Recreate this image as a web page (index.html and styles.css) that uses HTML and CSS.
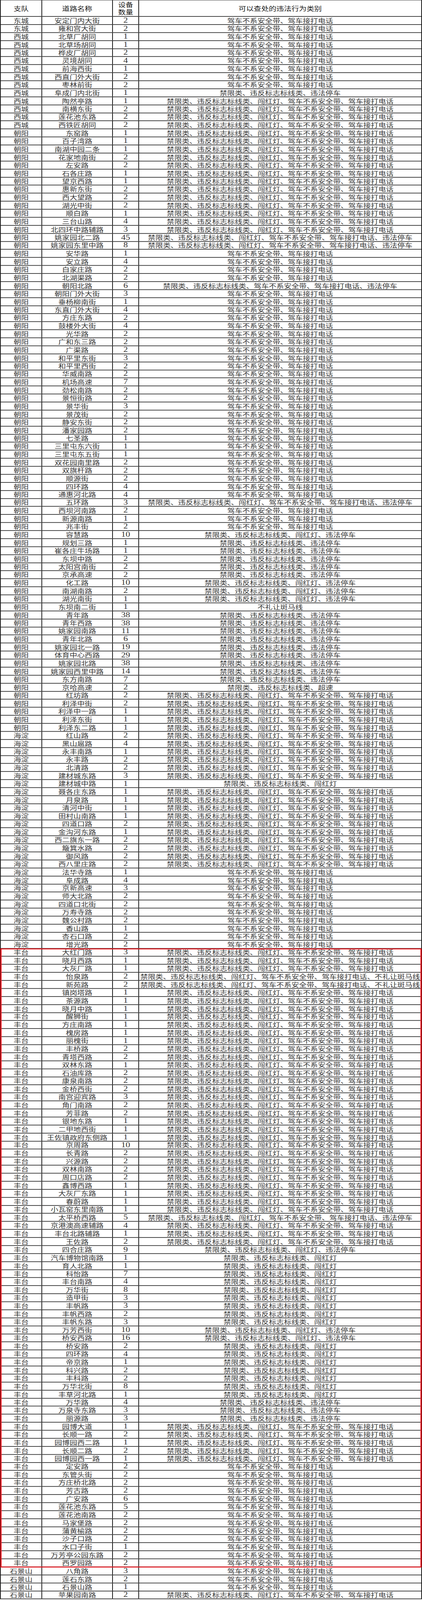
FILE: index.html
```html
<!DOCTYPE html>
<html lang="zh-CN">
<head>
<meta charset="utf-8">
<meta name="viewport" content="width=1080, initial-scale=1">
<title>可以查处的违法行为类别</title>
<link rel="stylesheet" href="styles.css">
</head>
<body>
<div class="wrap">
<div class="t">
<div class="h"><span>支队</span><span>道路名称</span><span><b class="two">设备<br>数量</b></span><span>可以查处的违法行为类别</span></div>
<div class="r"><span>东城</span><span>安定门内大街</span><span class="n">2</span><span>驾车不系安全带、驾车接打电话</span></div>
<div class="r"><span>东城</span><span>雍和宫大街</span><span class="n">2</span><span>驾车不系安全带、驾车接打电话</span></div>
<div class="r"><span>西城</span><span>北草厂胡同</span><span class="n">1</span><span>驾车不系安全带、驾车接打电话</span></div>
<div class="r"><span>西城</span><span>北草场胡同</span><span class="n">1</span><span>驾车不系安全带、驾车接打电话</span></div>
<div class="r"><span>西城</span><span>桦皮厂胡同</span><span class="n">2</span><span>驾车不系安全带、驾车接打电话</span></div>
<div class="r"><span>西城</span><span>灵境胡同</span><span class="n">4</span><span>驾车不系安全带、驾车接打电话</span></div>
<div class="r"><span>西城</span><span>前海西街</span><span class="n">1</span><span>驾车不系安全带、驾车接打电话</span></div>
<div class="r"><span>西城</span><span>西直门外大街</span><span class="n">2</span><span>驾车不系安全带、驾车接打电话</span></div>
<div class="r"><span>西城</span><span>枣林前街</span><span class="n">2</span><span>驾车不系安全带、驾车接打电话</span></div>
<div class="r"><span>西城</span><span>阜成门内北街</span><span class="n">1</span><span>禁限类、违反标志标线类、违法停车</span></div>
<div class="r"><span>西城</span><span>陶然亭路</span><span class="n">1</span><span>禁限类、违反标志标线类、闯红灯、驾车不系安全带、驾车接打电话</span></div>
<div class="r"><span>西城</span><span>南横东街</span><span class="n">2</span><span>禁限类、违反标志标线类、闯红灯、驾车不系安全带、驾车接打电话</span></div>
<div class="r"><span>西城</span><span>莲花池东路</span><span class="n">2</span><span>禁限类、违反标志标线类、闯红灯、驾车不系安全带、驾车接打电话</span></div>
<div class="r"><span>西城</span><span>西铁匠胡同</span><span class="n">2</span><span>禁限类、违反标志标线类、闯红灯、驾车不系安全带、驾车接打电话</span></div>
<div class="r"><span>朝阳</span><span>东窑路</span><span class="n">1</span><span>禁限类、违反标志标线类、闯红灯、驾车不系安全带、驾车接打电话</span></div>
<div class="r"><span>朝阳</span><span>百子湾路</span><span class="n">1</span><span>禁限类、违反标志标线类、闯红灯、驾车不系安全带、驾车接打电话</span></div>
<div class="r"><span>朝阳</span><span>南湖中园二条</span><span class="n">1</span><span>禁限类、违反标志标线类、闯红灯、驾车不系安全带、驾车接打电话</span></div>
<div class="r"><span>朝阳</span><span>花家地南街</span><span class="n">2</span><span>禁限类、违反标志标线类、闯红灯、驾车不系安全带、驾车接打电话</span></div>
<div class="r"><span>朝阳</span><span>左安路</span><span class="n">2</span><span>禁限类、违反标志标线类、闯红灯、驾车不系安全带、驾车接打电话</span></div>
<div class="r"><span>朝阳</span><span>石各庄路</span><span class="n">1</span><span>禁限类、违反标志标线类、闯红灯、驾车不系安全带、驾车接打电话</span></div>
<div class="r"><span>朝阳</span><span>望京西路</span><span class="n">1</span><span>禁限类、违反标志标线类、闯红灯、驾车不系安全带、驾车接打电话</span></div>
<div class="r"><span>朝阳</span><span>惠新东街</span><span class="n">2</span><span>禁限类、违反标志标线类、闯红灯、驾车不系安全带、驾车接打电话</span></div>
<div class="r"><span>朝阳</span><span>西大望路</span><span class="n">2</span><span>禁限类、违反标志标线类、闯红灯、驾车不系安全带、驾车接打电话</span></div>
<div class="r"><span>朝阳</span><span>湖光中街</span><span class="n">2</span><span>禁限类、违反标志标线类、闯红灯、驾车不系安全带、驾车接打电话</span></div>
<div class="r"><span>朝阳</span><span>顺白路</span><span class="n">1</span><span>禁限类、违反标志标线类、闯红灯、驾车不系安全带、驾车接打电话</span></div>
<div class="r"><span>朝阳</span><span>三台山路</span><span class="n">4</span><span>禁限类、违反标志标线类、闯红灯、驾车不系安全带、驾车接打电话</span></div>
<div class="r"><span>朝阳</span><span>北四环中路辅路</span><span class="n">3</span><span>禁限类、违反标志标线类、闯红灯、驾车不系安全带、驾车接打电话</span></div>
<div class="r"><span>朝阳</span><span>姚家园北二路</span><span class="n">45</span><span>禁限类、违反标志标线类、闯红灯、驾车不系安全带、驾车接打电话、违法停车</span></div>
<div class="r"><span>朝阳</span><span>姚家园东里中路</span><span class="n">8</span><span>禁限类、违反标志标线类、闯红灯、驾车不系安全带、驾车接打电话、违法停车</span></div>
<div class="r"><span>朝阳</span><span>安华路</span><span class="n">1</span><span>驾车不系安全带、驾车接打电话</span></div>
<div class="r"><span>朝阳</span><span>安立路</span><span class="n">4</span><span>驾车不系安全带、驾车接打电话</span></div>
<div class="r"><span>朝阳</span><span>白家庄路</span><span class="n">2</span><span>驾车不系安全带、驾车接打电话</span></div>
<div class="r"><span>朝阳</span><span>北湖渠路</span><span class="n">2</span><span>驾车不系安全带、驾车接打电话</span></div>
<div class="r"><span>朝阳</span><span>朝阳北路</span><span class="n">6</span><span>禁限类、违反标志标线类、驾车不系安全带、驾车接打电话、违法停车</span></div>
<div class="r"><span>朝阳</span><span>朝阳门外大街</span><span class="n">3</span><span>驾车不系安全带、驾车接打电话</span></div>
<div class="r"><span>朝阳</span><span>垂杨柳南街</span><span class="n">1</span><span>驾车不系安全带、驾车接打电话</span></div>
<div class="r"><span>朝阳</span><span>东直门外大街</span><span class="n">4</span><span>驾车不系安全带、驾车接打电话</span></div>
<div class="r"><span>朝阳</span><span>方庄东路</span><span class="n">2</span><span>驾车不系安全带、驾车接打电话</span></div>
<div class="r"><span>朝阳</span><span>鼓楼外大街</span><span class="n">4</span><span>驾车不系安全带、驾车接打电话</span></div>
<div class="r"><span>朝阳</span><span>光华路</span><span class="n">2</span><span>驾车不系安全带、驾车接打电话</span></div>
<div class="r"><span>朝阳</span><span>广和东三路</span><span class="n">2</span><span>驾车不系安全带、驾车接打电话</span></div>
<div class="r"><span>朝阳</span><span>广渠路</span><span class="n">2</span><span>驾车不系安全带、驾车接打电话</span></div>
<div class="r"><span>朝阳</span><span>和平里东街</span><span class="n">3</span><span>驾车不系安全带、驾车接打电话</span></div>
<div class="r"><span>朝阳</span><span>和平里西街</span><span class="n">2</span><span>驾车不系安全带、驾车接打电话</span></div>
<div class="r"><span>朝阳</span><span>华威南路</span><span class="n">2</span><span>驾车不系安全带、驾车接打电话</span></div>
<div class="r"><span>朝阳</span><span>机场高速</span><span class="n">7</span><span>驾车不系安全带、驾车接打电话</span></div>
<div class="r"><span>朝阳</span><span>劲松南路</span><span class="n">2</span><span>驾车不系安全带、驾车接打电话</span></div>
<div class="r"><span>朝阳</span><span>景恒街路</span><span class="n">2</span><span>驾车不系安全带、驾车接打电话</span></div>
<div class="r"><span>朝阳</span><span>景华街</span><span class="n">3</span><span>驾车不系安全带、驾车接打电话</span></div>
<div class="r"><span>朝阳</span><span>景茂街</span><span class="n">2</span><span>驾车不系安全带、驾车接打电话</span></div>
<div class="r"><span>朝阳</span><span>静安东街</span><span class="n">2</span><span>驾车不系安全带、驾车接打电话</span></div>
<div class="r"><span>朝阳</span><span>潘家园路</span><span class="n">2</span><span>驾车不系安全带、驾车接打电话</span></div>
<div class="r"><span>朝阳</span><span>七圣路</span><span class="n">1</span><span>驾车不系安全带、驾车接打电话</span></div>
<div class="r"><span>朝阳</span><span>三里屯东六街</span><span class="n">1</span><span>驾车不系安全带、驾车接打电话</span></div>
<div class="r"><span>朝阳</span><span>三里屯东五街</span><span class="n">1</span><span>驾车不系安全带、驾车接打电话</span></div>
<div class="r"><span>朝阳</span><span>双花园南里路</span><span class="n">2</span><span>驾车不系安全带、驾车接打电话</span></div>
<div class="r"><span>朝阳</span><span>双旗杆路</span><span class="n">2</span><span>驾车不系安全带、驾车接打电话</span></div>
<div class="r"><span>朝阳</span><span>顺源街</span><span class="n">2</span><span>驾车不系安全带、驾车接打电话</span></div>
<div class="r"><span>朝阳</span><span>四环路</span><span class="n">4</span><span>驾车不系安全带、驾车接打电话</span></div>
<div class="r"><span>朝阳</span><span>通惠河北路</span><span class="n">4</span><span>驾车不系安全带、驾车接打电话</span></div>
<div class="r"><span>朝阳</span><span>五环路</span><span class="n">3</span><span>禁限类、违反标志标线类、闯红灯、驾车不系安全带、驾车接打电话、违法停车</span></div>
<div class="r"><span>朝阳</span><span>西坝河南路</span><span class="n">2</span><span>驾车不系安全带、驾车接打电话</span></div>
<div class="r"><span>朝阳</span><span>新源南路</span><span class="n">1</span><span>驾车不系安全带、驾车接打电话</span></div>
<div class="r"><span>朝阳</span><span>兆丰街</span><span class="n">2</span><span>驾车不系安全带、驾车接打电话</span></div>
<div class="r"><span>朝阳</span><span>容慧路</span><span class="n">10</span><span>禁限类、违反标志标线类、闯红灯、违法停车</span></div>
<div class="r"><span>朝阳</span><span>规划三路</span><span class="n">1</span><span>禁限类、违反标志标线类、违法停车</span></div>
<div class="r"><span>朝阳</span><span>崔各庄牛场路</span><span class="n">1</span><span>禁限类、违反标志标线类、违法停车</span></div>
<div class="r"><span>朝阳</span><span>东坝中路</span><span class="n">2</span><span>禁限类、违反标志标线类、违法停车</span></div>
<div class="r"><span>朝阳</span><span>太阳宫南街</span><span class="n">2</span><span>禁限类、违反标志标线类、违法停车</span></div>
<div class="r"><span>朝阳</span><span>京承高速</span><span class="n">2</span><span>禁限类、违反标志标线类、违法停车</span></div>
<div class="r"><span>朝阳</span><span>化工路</span><span class="n">10</span><span>禁限类、违反标志标线类、闯红灯、违法停车</span></div>
<div class="r"><span>朝阳</span><span>南湖南路</span><span class="n">2</span><span>禁限类、违反标志标线类、闯红灯、违法停车</span></div>
<div class="r"><span>朝阳</span><span>湖光南街</span><span class="n">1</span><span>禁限类、违反标志标线类、闯红灯、违法停车</span></div>
<div class="r"><span>朝阳</span><span>东坝南二街</span><span class="n">1</span><span>不礼让斑马线</span></div>
<div class="r"><span>朝阳</span><span>青年路</span><span class="n">38</span><span>禁限类、违反标志标线类、违法停车</span></div>
<div class="r"><span>朝阳</span><span>青年西路</span><span class="n">38</span><span>禁限类、违反标志标线类、违法停车</span></div>
<div class="r"><span>朝阳</span><span>姚家园南路</span><span class="n">11</span><span>禁限类、违反标志标线类、违法停车</span></div>
<div class="r"><span>朝阳</span><span>青年北路</span><span class="n">6</span><span>禁限类、违反标志标线类、违法停车</span></div>
<div class="r"><span>朝阳</span><span>姚家园北一路</span><span class="n">19</span><span>禁限类、违反标志标线类、违法停车</span></div>
<div class="r"><span>朝阳</span><span>体育中心西路</span><span class="n">29</span><span>禁限类、违反标志标线类、违法停车</span></div>
<div class="r"><span>朝阳</span><span>姚家园北路</span><span class="n">38</span><span>禁限类、违反标志标线类、违法停车</span></div>
<div class="r"><span>朝阳</span><span>姚家园西里中路</span><span class="n">14</span><span>禁限类、违反标志标线类、违法停车</span></div>
<div class="r"><span>朝阳</span><span>东方南路</span><span class="n">7</span><span>禁限类、违反标志标线类、违法停车</span></div>
<div class="r"><span>朝阳</span><span>京哈高速</span><span class="n">2</span><span>禁限类、违反标志标线类、超速</span></div>
<div class="r"><span>朝阳</span><span>红坊路</span><span class="n">2</span><span>禁限类、违反标志标线类、闯红灯、驾车不系安全带、驾车接打电话</span></div>
<div class="r"><span>朝阳</span><span>利泽中街</span><span class="n">2</span><span>禁限类、违反标志标线类、闯红灯、驾车不系安全带、驾车接打电话</span></div>
<div class="r"><span>朝阳</span><span>利泽中一路</span><span class="n">1</span><span>禁限类、违反标志标线类、闯红灯、驾车不系安全带、驾车接打电话</span></div>
<div class="r"><span>朝阳</span><span>利泽东街</span><span class="n">1</span><span>禁限类、违反标志标线类、闯红灯、驾车不系安全带、驾车接打电话</span></div>
<div class="r"><span>朝阳</span><span>利泽东二路</span><span class="n">1</span><span>禁限类、违反标志标线类、闯红灯、驾车不系安全带、驾车接打电话</span></div>
<div class="r"><span>海淀</span><span>红山路</span><span class="n">2</span><span>禁限类、违反标志标线类、闯红灯、驾车不系安全带、驾车接打电话</span></div>
<div class="r"><span>海淀</span><span>黑山扈路</span><span class="n">4</span><span>禁限类、违反标志标线类、闯红灯、驾车不系安全带、驾车接打电话</span></div>
<div class="r"><span>海淀</span><span>永丰南路</span><span class="n">1</span><span>禁限类、违反标志标线类、闯红灯、驾车不系安全带、驾车接打电话</span></div>
<div class="r"><span>海淀</span><span>永丰路</span><span class="n">2</span><span>禁限类、违反标志标线类、闯红灯、驾车不系安全带、驾车接打电话</span></div>
<div class="r"><span>海淀</span><span>北清路</span><span class="n">2</span><span>禁限类、违反标志标线类、闯红灯、驾车不系安全带、驾车接打电话</span></div>
<div class="r"><span>海淀</span><span>建材城东路</span><span class="n">3</span><span>禁限类、违反标志标线类、闯红灯、驾车不系安全带、驾车接打电话</span></div>
<div class="r"><span>海淀</span><span>建材城中路</span><span class="n">1</span><span>禁限类、违反标志标线类、闯红灯</span></div>
<div class="r"><span>海淀</span><span>聂各庄东路</span><span class="n">1</span><span>禁限类、违反标志标线类、闯红灯、驾车不系安全带、驾车接打电话</span></div>
<div class="r"><span>海淀</span><span>月泉路</span><span class="n">1</span><span>禁限类、违反标志标线类、闯红灯、驾车不系安全带、驾车接打电话</span></div>
<div class="r"><span>海淀</span><span>清河中街</span><span class="n">1</span><span>禁限类、违反标志标线类、闯红灯、驾车不系安全带、驾车接打电话</span></div>
<div class="r"><span>海淀</span><span>田村山南路</span><span class="n">1</span><span>禁限类、违反标志标线类、闯红灯、驾车不系安全带、驾车接打电话</span></div>
<div class="r"><span>海淀</span><span>四道口路</span><span class="n">2</span><span>禁限类、违反标志标线类、闯红灯、驾车不系安全带、驾车接打电话</span></div>
<div class="r"><span>海淀</span><span>金沟河东路</span><span class="n">1</span><span>禁限类、违反标志标线类、闯红灯、驾车不系安全带、驾车接打电话</span></div>
<div class="r"><span>海淀</span><span>西二旗东一路</span><span class="n">2</span><span>禁限类、违反标志标线类、闯红灯、驾车不系安全带、驾车接打电话</span></div>
<div class="r"><span>海淀</span><span>簸箕水路</span><span class="n">2</span><span>禁限类、违反标志标线类、闯红灯、驾车不系安全带、驾车接打电话</span></div>
<div class="r"><span>海淀</span><span>御风路</span><span class="n">2</span><span>禁限类、违反标志标线类、闯红灯、驾车不系安全带、驾车接打电话</span></div>
<div class="r"><span>海淀</span><span>西八里庄路</span><span class="n">2</span><span>禁限类、违反标志标线类、闯红灯、驾车不系安全带、驾车接打电话</span></div>
<div class="r"><span>海淀</span><span>法华寺路</span><span class="n">1</span><span>驾车不系安全带、驾车接打电话</span></div>
<div class="r"><span>海淀</span><span>阜成路</span><span class="n">4</span><span>驾车不系安全带、驾车接打电话</span></div>
<div class="r"><span>海淀</span><span>京新高速</span><span class="n">3</span><span>驾车不系安全带、驾车接打电话</span></div>
<div class="r"><span>海淀</span><span>师大北路</span><span class="n">2</span><span>驾车不系安全带、驾车接打电话</span></div>
<div class="r"><span>海淀</span><span>四道口北街</span><span class="n">2</span><span>驾车不系安全带、驾车接打电话</span></div>
<div class="r"><span>海淀</span><span>万寿寺路</span><span class="n">2</span><span>驾车不系安全带、驾车接打电话</span></div>
<div class="r"><span>海淀</span><span>魏公村路</span><span class="n">2</span><span>驾车不系安全带、驾车接打电话</span></div>
<div class="r"><span>海淀</span><span>香山路</span><span class="n">1</span><span>驾车不系安全带、驾车接打电话</span></div>
<div class="r"><span>海淀</span><span>杏石口路</span><span class="n">2</span><span>驾车不系安全带、驾车接打电话</span></div>
<div class="r"><span>海淀</span><span>增光路</span><span class="n">2</span><span>驾车不系安全带、驾车接打电话</span></div>
<div class="hl">
<div class="r"><span>丰台</span><span>大红门路</span><span class="n">3</span><span>禁限类、违反标志标线类、闯红灯、驾车不系安全带、驾车接打电话</span></div>
<div class="r"><span>丰台</span><span>晓月西路</span><span class="n">1</span><span>禁限类、违反标志标线类、闯红灯、驾车不系安全带、驾车接打电话</span></div>
<div class="r"><span>丰台</span><span>大灰厂路</span><span class="n">1</span><span>禁限类、违反标志标线类、闯红灯、驾车不系安全带、驾车接打电话</span></div>
<div class="r"><span>丰台</span><span>怡泉路</span><span class="n">2</span><span>禁限类、违反标志标线类、闯红灯、驾车不系安全带、驾车接打电话、不礼让斑马线</span></div>
<div class="r"><span>丰台</span><span>新苑路</span><span class="n">2</span><span>禁限类、违反标志标线类、闯红灯、驾车不系安全带、驾车接打电话、不礼让斑马线</span></div>
<div class="r"><span>丰台</span><span>镇岗塔路</span><span class="n">1</span><span>禁限类、违反标志标线类、闯红灯、驾车不系安全带、驾车接打电话</span></div>
<div class="r"><span>丰台</span><span>茶源路</span><span class="n">1</span><span>禁限类、违反标志标线类、闯红灯、驾车不系安全带、驾车接打电话</span></div>
<div class="r"><span>丰台</span><span>晓月中路</span><span class="n">1</span><span>禁限类、违反标志标线类、闯红灯、驾车不系安全带、驾车接打电话</span></div>
<div class="r"><span>丰台</span><span>醒狮街</span><span class="n">1</span><span>禁限类、违反标志标线类、闯红灯、驾车不系安全带、驾车接打电话</span></div>
<div class="r"><span>丰台</span><span>方庄南路</span><span class="n">1</span><span>禁限类、违反标志标线类、闯红灯、驾车不系安全带、驾车接打电话</span></div>
<div class="r"><span>丰台</span><span>槐房路</span><span class="n">1</span><span>禁限类、违反标志标线类、闯红灯、驾车不系安全带、驾车接打电话</span></div>
<div class="r"><span>丰台</span><span>丽槐街</span><span class="n">1</span><span>禁限类、违反标志标线类、闯红灯、驾车不系安全带、驾车接打电话</span></div>
<div class="r"><span>丰台</span><span>丰桥路</span><span class="n">2</span><span>禁限类、违反标志标线类、闯红灯、驾车不系安全带、驾车接打电话</span></div>
<div class="r"><span>丰台</span><span>青塔西路</span><span class="n">2</span><span>禁限类、违反标志标线类、闯红灯、驾车不系安全带、驾车接打电话</span></div>
<div class="r"><span>丰台</span><span>双林东路</span><span class="n">1</span><span>禁限类、违反标志标线类、闯红灯、驾车不系安全带、驾车接打电话</span></div>
<div class="r"><span>丰台</span><span>石油库路</span><span class="n">2</span><span>禁限类、违反标志标线类、闯红灯、驾车不系安全带、驾车接打电话</span></div>
<div class="r"><span>丰台</span><span>康泉南路</span><span class="n">2</span><span>禁限类、违反标志标线类、闯红灯、驾车不系安全带、驾车接打电话</span></div>
<div class="r"><span>丰台</span><span>金桥西街</span><span class="n">2</span><span>禁限类、违反标志标线类、闯红灯、驾车不系安全带、驾车接打电话</span></div>
<div class="r"><span>丰台</span><span>南宫迎宾路</span><span class="n">3</span><span>禁限类、违反标志标线类、闯红灯、驾车不系安全带、驾车接打电话</span></div>
<div class="r"><span>丰台</span><span>角门南路</span><span class="n">2</span><span>禁限类、违反标志标线类、闯红灯、驾车不系安全带、驾车接打电话</span></div>
<div class="r"><span>丰台</span><span>芳菲路</span><span class="n">2</span><span>禁限类、违反标志标线类、闯红灯、驾车不系安全带、驾车接打电话</span></div>
<div class="r"><span>丰台</span><span>银地东路</span><span class="n">1</span><span>禁限类、违反标志标线类、闯红灯、驾车不系安全带、驾车接打电话</span></div>
<div class="r"><span>丰台</span><span>二甲地西街</span><span class="n">1</span><span>禁限类、违反标志标线类、闯红灯、驾车不系安全带、驾车接打电话</span></div>
<div class="r"><span>丰台</span><span>王佐镇政府东侧路</span><span class="n">1</span><span>禁限类、违反标志标线类、闯红灯、驾车不系安全带、驾车接打电话</span></div>
<div class="r"><span>丰台</span><span>京周路</span><span class="n">10</span><span>禁限类、违反标志标线类、闯红灯、驾车不系安全带、驾车接打电话</span></div>
<div class="r"><span>丰台</span><span>长青路</span><span class="n">2</span><span>禁限类、违反标志标线类、闯红灯、驾车不系安全带、驾车接打电话</span></div>
<div class="r"><span>丰台</span><span>兴源路</span><span class="n">2</span><span>禁限类、违反标志标线类、闯红灯、驾车不系安全带、驾车接打电话</span></div>
<div class="r"><span>丰台</span><span>双林南路</span><span class="n">2</span><span>禁限类、违反标志标线类、闯红灯、驾车不系安全带、驾车接打电话</span></div>
<div class="r"><span>丰台</span><span>周口店路</span><span class="n">2</span><span>禁限类、违反标志标线类、闯红灯、驾车不系安全带、驾车接打电话</span></div>
<div class="r"><span>丰台</span><span>鑫博西路</span><span class="n">1</span><span>禁限类、违反标志标线类、闯红灯、驾车不系安全带、驾车接打电话</span></div>
<div class="r"><span>丰台</span><span>大灰厂东路</span><span class="n">1</span><span>禁限类、违反标志标线类、闯红灯、驾车不系安全带、驾车接打电话</span></div>
<div class="r"><span>丰台</span><span>春蔚路</span><span class="n">1</span><span>禁限类、违反标志标线类、闯红灯、驾车不系安全带、驾车接打电话</span></div>
<div class="r"><span>丰台</span><span>小瓦窑东里南路</span><span class="n">1</span><span>禁限类、违反标志标线类、闯红灯、驾车不系安全带、驾车接打电话</span></div>
<div class="r"><span>丰台</span><span>太平桥西路</span><span class="n">5</span><span>禁限类、违反标志标线类、闯红灯、驾车不系安全带、驾车接打电话、违法停车</span></div>
<div class="r"><span>丰台</span><span>京港澳高速辅路</span><span class="n">4</span><span>禁限类、违反标志标线类、闯红灯、驾车不系安全带、驾车接打电话</span></div>
<div class="r"><span>丰台</span><span>丰台北路辅路</span><span class="n">1</span><span>禁限类、违反标志标线类、闯红灯、驾车不系安全带、驾车接打电话</span></div>
<div class="r"><span>丰台</span><span>王佐路</span><span class="n">2</span><span>禁限类、违反标志标线类、闯红灯、驾车不系安全带、驾车接打电话</span></div>
<div class="r"><span>丰台</span><span>四合庄路</span><span class="n">9</span><span>禁限类、违反标志标线类、闯红灯、违法停车</span></div>
<div class="r"><span>丰台</span><span>汽车博物馆南路</span><span class="n">1</span><span>禁限类、违反标志标线类、闯红灯</span></div>
<div class="r"><span>丰台</span><span>育人北路</span><span class="n">1</span><span>禁限类、违反标志标线类、闯红灯</span></div>
<div class="r"><span>丰台</span><span>科怡路</span><span class="n">7</span><span>禁限类、违反标志标线类、闯红灯</span></div>
<div class="r"><span>丰台</span><span>丰台南路</span><span class="n">4</span><span>禁限类、违反标志标线类、闯红灯</span></div>
<div class="r"><span>丰台</span><span>万华街</span><span class="n">8</span><span>禁限类、违反标志标线类、闯红灯</span></div>
<div class="r"><span>丰台</span><span>造甲街</span><span class="n">3</span><span>禁限类、违反标志标线类、闯红灯</span></div>
<div class="r"><span>丰台</span><span>丰帆路</span><span class="n">3</span><span>禁限类、违反标志标线类、闯红灯</span></div>
<div class="r"><span>丰台</span><span>丰帆西路</span><span class="n">2</span><span>禁限类、违反标志标线类、闯红灯</span></div>
<div class="r"><span>丰台</span><span>丰帆东路</span><span class="n">3</span><span>禁限类、违反标志标线类、闯红灯</span></div>
<div class="r"><span>丰台</span><span>万芳西街</span><span class="n">10</span><span>禁限类、违反标志标线类、闯红灯、违法停车</span></div>
<div class="r"><span>丰台</span><span>桥安西路</span><span class="n">16</span><span>禁限类、违反标志标线类、闯红灯、违法停车</span></div>
<div class="r"><span>丰台</span><span>桥安路</span><span class="n">2</span><span>禁限类、违反标志标线类、闯红灯</span></div>
<div class="r"><span>丰台</span><span>四环路</span><span class="n">4</span><span>禁限类、违反标志标线类、闯红灯</span></div>
<div class="r"><span>丰台</span><span>帝京路</span><span class="n">1</span><span>禁限类、违反标志标线类、闯红灯</span></div>
<div class="r"><span>丰台</span><span>科兴路</span><span class="n">2</span><span>禁限类、违反标志标线类、闯红灯</span></div>
<div class="r"><span>丰台</span><span>丰科路</span><span class="n">2</span><span>禁限类、违反标志标线类、闯红灯</span></div>
<div class="r"><span>丰台</span><span>万华北街</span><span class="n">8</span><span>禁限类、违反标志标线类、闯红灯</span></div>
<div class="r"><span>丰台</span><span>丰草河北路</span><span class="n">1</span><span>禁限类、违反标志标线类、闯红灯</span></div>
<div class="r"><span>丰台</span><span>万华路</span><span class="n">4</span><span>禁限类、违反标志标线类、违法停车</span></div>
<div class="r"><span>丰台</span><span>万泉寺东路</span><span class="n">3</span><span>禁限类、违反标志标线类、违法停车</span></div>
<div class="r"><span>丰台</span><span>丽源路</span><span class="n">3</span><span>禁限类、违反标志标线类、违法停车</span></div>
<div class="r"><span>丰台</span><span>园博大道</span><span class="n">1</span><span>禁限类、违反标志标线类、闯红灯、驾车不系安全带、驾车接打电话</span></div>
<div class="r"><span>丰台</span><span>长顺一路</span><span class="n">2</span><span>禁限类、违反标志标线类、闯红灯、驾车不系安全带、驾车接打电话</span></div>
<div class="r"><span>丰台</span><span>园博园西二路</span><span class="n">1</span><span>禁限类、违反标志标线类、闯红灯、驾车不系安全带、驾车接打电话</span></div>
<div class="r"><span>丰台</span><span>长顺二路</span><span class="n">2</span><span>禁限类、违反标志标线类、闯红灯、驾车不系安全带、驾车接打电话</span></div>
<div class="r"><span>丰台</span><span>园博园西一路</span><span class="n">1</span><span>禁限类、违反标志标线类、闯红灯、驾车不系安全带、驾车接打电话</span></div>
<div class="r"><span>丰台</span><span>定安路</span><span class="n">2</span><span>驾车不系安全带、驾车接打电话</span></div>
<div class="r"><span>丰台</span><span>东管头街</span><span class="n">2</span><span>驾车不系安全带、驾车接打电话</span></div>
<div class="r"><span>丰台</span><span>方庄桥北路</span><span class="n">2</span><span>驾车不系安全带、驾车接打电话</span></div>
<div class="r"><span>丰台</span><span>芳古路</span><span class="n">2</span><span>驾车不系安全带、驾车接打电话</span></div>
<div class="r"><span>丰台</span><span>广安路</span><span class="n">6</span><span>驾车不系安全带、驾车接打电话</span></div>
<div class="r"><span>丰台</span><span>莲花池东路</span><span class="n">5</span><span>驾车不系安全带、驾车接打电话</span></div>
<div class="r"><span>丰台</span><span>莲花池南路</span><span class="n">2</span><span>驾车不系安全带、驾车接打电话</span></div>
<div class="r"><span>丰台</span><span>马家堡路</span><span class="n">2</span><span>驾车不系安全带、驾车接打电话</span></div>
<div class="r"><span>丰台</span><span>蒲黄榆路</span><span class="n">2</span><span>驾车不系安全带、驾车接打电话</span></div>
<div class="r"><span>丰台</span><span>沙子口路</span><span class="n">2</span><span>驾车不系安全带、驾车接打电话</span></div>
<div class="r"><span>丰台</span><span>水口子街</span><span class="n">1</span><span>驾车不系安全带、驾车接打电话</span></div>
<div class="r"><span>丰台</span><span>万芳亭公园东路</span><span class="n">2</span><span>驾车不系安全带、驾车接打电话</span></div>
<div class="r"><span>丰台</span><span>西罗园路</span><span class="n">2</span><span>驾车不系安全带、驾车接打电话</span></div>
</div>
<div class="r"><span>石景山</span><span>八角路</span><span class="n">3</span><span>驾车不系安全带、驾车接打电话</span></div>
<div class="r"><span>石景山</span><span>莲石东路</span><span class="n">2</span><span>驾车不系安全带、驾车接打电话</span></div>
<div class="r"><span>石景山</span><span>石景山路</span><span class="n">1</span><span>驾车不系安全带、驾车接打电话</span></div>
<div class="r"><span>石景山</span><span>苹果园南路</span><span class="n">2</span><span>禁限类、违反标志标线类、闯红灯、驾车不系安全带、驾车接打电话</span></div>
</div>
</div>
</body>
</html>
```

FILE: styles.css
```css
html, body {
  margin: 0;
  padding: 0;
  background: #ffffff;
  -webkit-text-size-adjust: 100%;
  text-size-adjust: 100%;
}

body {
  width: 1080px;
}

/* the capture frame here is shorter than the design height:
   the table is laid out at full size and scaled to fit it */
.wrap {
  width: 1080px;
  height: 4095px;
  overflow: hidden;
}

.t {
  width: 1080px;
  box-sizing: border-box;
  border-left: 2px solid #1c1c1c;
  border-right: 2px solid #1c1c1c;
  border-top: 1px solid #1c1c1c;
  font-family: "Noto Sans CJK SC", "Noto Sans CJK JP", sans-serif;
  color: #333333;
  transform: scaleY(0.79477);
  transform-origin: 0 0;
}

.h,
.r {
  display: grid;
  grid-template-columns: 106px 181px 67px 722px;
  box-sizing: border-box;
  border-bottom: 2px solid #1c1c1c;
}

.h {
  height: 53px;
  color: #161616;
}

.r {
  height: 25.875px;
}

.h > span,
.r > span {
  display: flex;
  align-items: center;
  justify-content: center;
  min-width: 0;
  border-right: 2px solid #1c1c1c;
  white-space: nowrap;
  font-size: 19.35px;
  line-height: 20px;
}

.h > span:last-child,
.r > span:last-child {
  border-right: 0;
}

.two {
  font-weight: normal;
  line-height: 24px;
  text-align: center;
}

.r > span.n {
  font-family: "Liberation Serif", "Times New Roman", serif;
  font-size: 23px;
}

.hl {
  outline: 3.5px solid #e8141c;
  outline-offset: -2.5px;
}
```
